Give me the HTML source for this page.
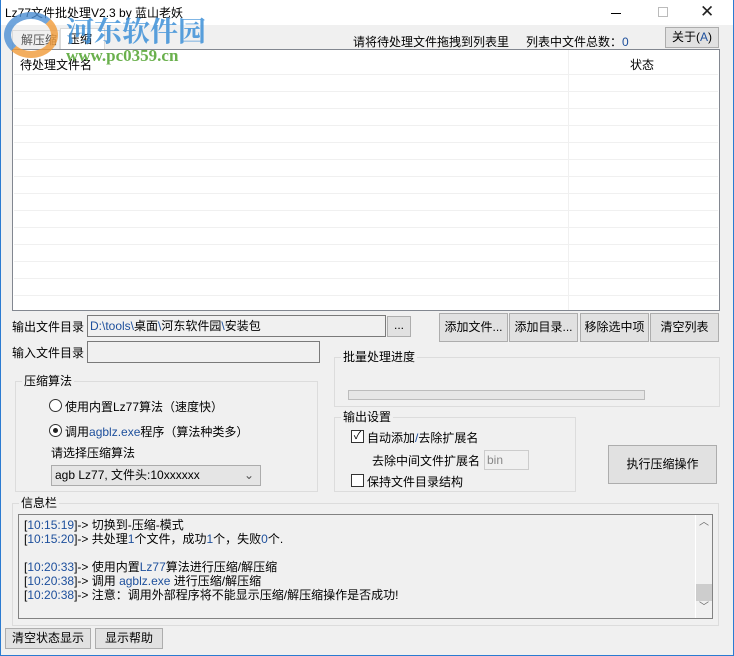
<!DOCTYPE html>
<html><head><meta charset="utf-8"><style>
*{box-sizing:border-box;margin:0;padding:0}
body{width:734px;height:656px;overflow:hidden;background:#f0f0f0;font:12px "Liberation Sans","Noto Sans CJK SC",sans-serif;color:#000;position:relative}
.a{position:absolute;white-space:nowrap}
.btn{position:absolute;background:#e1e1e1;border:1px solid #adadad;text-align:center;line-height:24px;font-size:12px}
.grp{position:absolute;border:1px solid #dcdcdc}
.gl{position:absolute;background:#f0f0f0;padding:0 2px;top:-9px;left:6px;line-height:16px}
.row{position:absolute;left:1px;right:1px;height:1px;background:#f0f0f0}
.chk{position:absolute;width:13px;height:13px;border:1px solid #333;background:#fff}
.rad{position:absolute;width:13px;height:13px;border:1px solid #333;border-radius:50%;background:#fff}
.blue{color:#1d4f9c}
.wm{z-index:5}
</style></head><body>
<div class="a" style="left:0;top:0;width:734px;height:25px;background:#fff"></div>
<div class="a" style="left:5px;top:4px;font-size:12px">Lz77文件批处理V2.3 by 蓝山老妖</div>
<div class="a" style="left:611px;top:13px;width:10px;height:1px;background:#000"></div>
<div class="a" style="left:658px;top:7px;width:10px;height:10px;border:1px solid #bbb"></div>
<div class="a" style="left:700px;top:0px;font-size:17px;line-height:24px;color:#222">✕</div>
<div class="a" style="left:0;top:0;width:1px;height:656px;background:#2b7bd1"></div>
<div class="a" style="right:0;top:0;width:1px;height:656px;background:#2b7bd1"></div>
<div class="a" style="left:0;bottom:0;width:734px;height:1px;background:#2b7bd1"></div>
<!-- tabs -->
<div class="a" style="left:12px;top:30px;width:48px;height:19px;border:1px solid #d9d9d9;border-bottom:none;padding-left:8px;line-height:18px;color:#555">解压缩</div>
<div class="a" style="left:60px;top:28px;width:45px;height:22px;background:#fff;border:1px solid #d9d9d9;border-bottom:none;padding-left:7px;line-height:20px">压缩</div>
<div class="a" style="left:353px;top:33px">请将待处理文件拖拽到列表里</div>
<div class="a" style="left:526px;top:33px">列表中文件总数：<span class="blue">0</span></div>
<div class="btn" style="left:665px;top:27px;width:54px;height:21px;line-height:19px;background:#e1e1e1">关于(<span class="blue">A</span>)</div>
<!-- list -->
<div class="a" style="left:12px;top:49px;width:708px;height:262px;background:#fff;border:1px solid #828790">
 <div class="a" style="left:7px;top:6px">待处理文件名</div>
 <div class="a" style="left:617px;top:6px">状态</div>
 <div class="a" style="left:555px;top:0;width:1px;height:260px;background:#f0f0f0"></div>
 <div class="row" style="top:24px"></div><div class="row" style="top:41px"></div><div class="row" style="top:58px"></div><div class="row" style="top:75px"></div><div class="row" style="top:92px"></div><div class="row" style="top:109px"></div><div class="row" style="top:126px"></div><div class="row" style="top:143px"></div><div class="row" style="top:160px"></div><div class="row" style="top:177px"></div><div class="row" style="top:194px"></div><div class="row" style="top:211px"></div><div class="row" style="top:228px"></div><div class="row" style="top:245px"></div>
</div>
<!-- watermark -->
<div class="a wm" style="left:4px;top:12px;width:54px;height:46px;border-radius:50%;border:7px solid #f19a38;border-left-color:#4d8fd4;border-top-color:#4d8fd4;opacity:.8"></div>
<div class="a wm" style="left:66px;top:10px;font:bold 28px 'Noto Serif CJK SC',serif;color:#3d90d8;opacity:.85">河东软件园</div>
<div class="a wm" style="left:66px;top:46px;font:bold 17px 'Liberation Serif',serif;color:#5aa83a;opacity:.9">www.pc0359.cn</div>
<!-- paths -->
<div class="a" style="left:12px;top:318px">输出文件目录</div>
<div class="a" style="left:87px;top:315px;width:299px;height:22px;border:1px solid #7a7a7a;background:#f0f0f0;padding-left:2px;line-height:20px"><span class="blue">D:\tools\</span>桌面<span class="blue">\</span>河东软件园<span class="blue">\</span>安装包</div>
<div class="btn" style="left:387px;top:316px;width:24px;height:21px;line-height:17px">...</div>
<div class="a" style="left:12px;top:344px">输入文件目录</div>
<div class="a" style="left:87px;top:341px;width:233px;height:22px;border:1px solid #7a7a7a;background:#f0f0f0"></div>
<div class="btn" style="left:439px;top:313px;width:69px;height:29px;line-height:27px">添加文件...</div>
<div class="btn" style="left:509px;top:313px;width:69px;height:29px;line-height:27px">添加目录...</div>
<div class="btn" style="left:580px;top:313px;width:69px;height:29px;line-height:27px">移除选中项</div>
<div class="btn" style="left:650px;top:313px;width:69px;height:29px;line-height:27px">清空列表</div>
<!-- algo group -->
<div class="grp" style="left:15px;top:381px;width:303px;height:111px"><div class="gl">压缩算法</div></div>
<div class="rad" style="left:49px;top:399px"></div>
<div class="a" style="left:65px;top:398px">使用内置Lz77算法（速度快）</div>
<div class="rad" style="left:49px;top:424px"><div class="a" style="left:3px;top:3px;width:5px;height:5px;border-radius:50%;background:#222"></div></div>
<div class="a" style="left:65px;top:423px">调用<span class="blue">agblz.exe</span>程序（算法种类多）</div>
<div class="a" style="left:51px;top:444px">请选择压缩算法</div>
<div class="a" style="left:51px;top:465px;width:210px;height:21px;background:#e5e5e5;border:1px solid #acacac;padding-left:3px;line-height:19px">agb Lz77, 文件头:10xxxxxx<span class="a" style="left:192px;top:0;color:#555">⌄</span></div>
<!-- progress -->
<div class="grp" style="left:334px;top:357px;width:386px;height:50px"><div class="gl">批量处理进度</div></div>
<div class="a" style="left:348px;top:390px;width:297px;height:10px;background:#e6e6e6;border:1px solid #bcbcbc"></div>
<!-- output settings -->
<div class="grp" style="left:334px;top:417px;width:242px;height:75px"><div class="gl">输出设置</div></div>
<div class="chk" style="left:351px;top:430px;font-size:11px;line-height:11px;text-align:center">✓</div>
<div class="a" style="left:367px;top:429px">自动添加<span class="blue">/</span>去除扩展名</div>
<div class="a" style="left:372px;top:452px">去除中间文件扩展名</div>
<div class="a" style="left:484px;top:450px;width:45px;height:20px;border:1px solid #ccc;background:#f0f0f0;color:#888;padding-left:2px;line-height:18px">bin</div>
<div class="chk" style="left:351px;top:474px"></div>
<div class="a" style="left:367px;top:473px">保持文件目录结构</div>
<div class="btn" style="left:608px;top:445px;width:109px;height:39px;line-height:37px">执行压缩操作</div>
<!-- info -->
<div class="grp" style="left:12px;top:503px;width:707px;height:123px"><div class="gl">信息栏</div></div>
<div class="a" style="left:18px;top:514px;width:695px;height:105px;border:1px solid #828282;background:#f0f0f0;line-height:14px;padding:3px 0 0 5px">
<div>[<span class="blue">10:15:19</span>]-&gt; 切换到-压缩-模式</div>
<div>[<span class="blue">10:15:20</span>]-&gt; 共处理<span class="blue">1</span>个文件，成功<span class="blue">1</span>个，失败<span class="blue">0</span>个.</div>
<div>&nbsp;</div>
<div>[<span class="blue">10:20:33</span>]-&gt; 使用内置<span class="blue">Lz77</span>算法进行压缩/解压缩</div>
<div>[<span class="blue">10:20:38</span>]-&gt; 调用 <span class="blue">agblz.exe</span> 进行压缩/解压缩</div>
<div>[<span class="blue">10:20:38</span>]-&gt; 注意：调用外部程序将不能显示压缩/解压缩操作是否成功!</div>
<div class="a" style="right:0;top:0;width:17px;height:103px;border-left:1px solid #fff">
 <div class="a" style="left:3px;top:1px;color:#666;font-size:10px">︿</div>
 <div class="a" style="left:0;top:69px;width:16px;height:17px;background:#cdcdcd"></div>
 <div class="a" style="left:3px;top:86px;color:#666;font-size:10px">﹀</div>
</div>
</div>
<div class="btn" style="left:5px;top:628px;width:86px;height:21px;line-height:19px">清空状态显示</div>
<div class="btn" style="left:95px;top:628px;width:68px;height:21px;line-height:19px">显示帮助</div>
</body></html>
